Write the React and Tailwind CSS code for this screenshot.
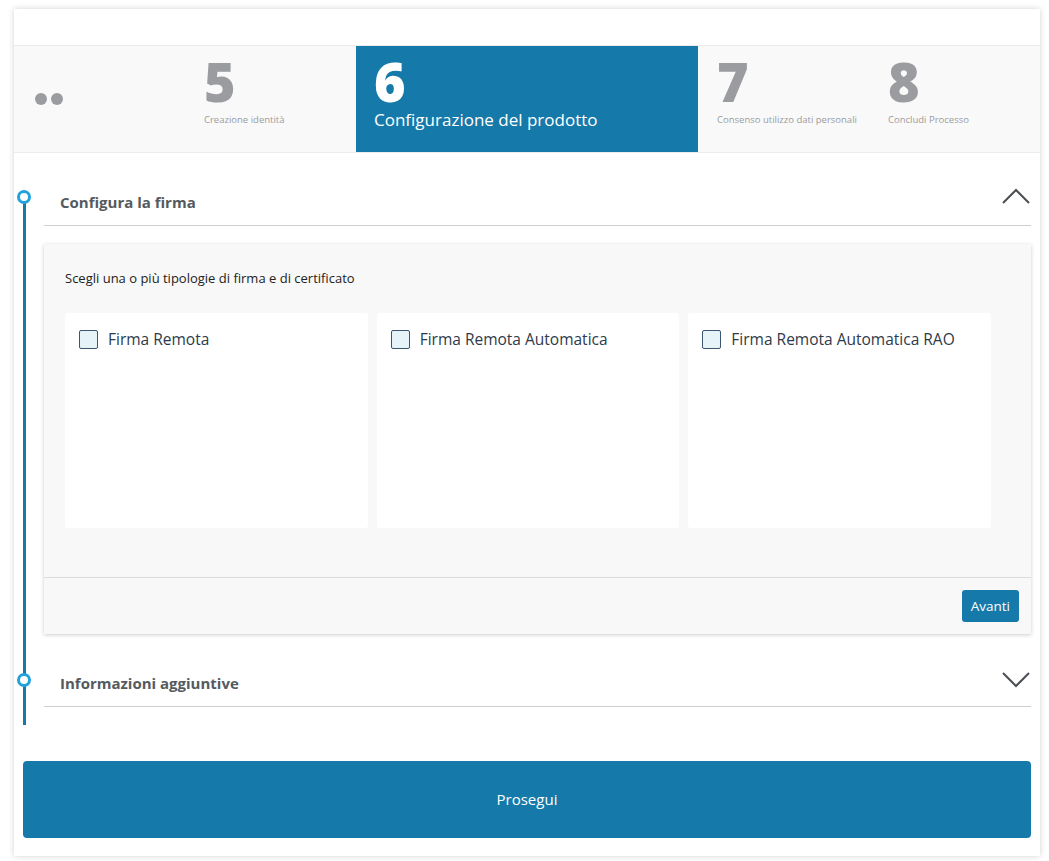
import React from "react";

const steps = [
  { n: "5", label: "Creazione identità" },
  { n: "6", label: "Configurazione del prodotto", active: true },
  { n: "7", label: "Consenso utilizzo dati personali" },
  { n: "8", label: "Concludi Processo" },
];

const options = ["Firma Remota", "Firma Remota Automatica", "Firma Remota Automatica RAO"];

const Chevron = ({ up }) => (
  <svg width="30" height="16" viewBox="0 0 30 16" fill="none" stroke="#4a4f55" strokeWidth="2">
    {up ? <path d="M2 15 L15 2 L28 15" /> : <path d="M2 1 L15 14 L28 1" />}
  </svg>
);

const Stepper = () => (
  <div className="grid grid-cols-6 h-[108px] bg-[#f9f9f9] border-y border-[#ececec]">
    <div className="flex items-center pl-[21px] gap-[4px]">
      <span className="w-[12px] h-[12px] rounded-full bg-[#9a9ca0]" />
      <span className="w-[12px] h-[12px] rounded-full bg-[#9a9ca0]" />
    </div>
    {steps.map((s) =>
      s.active ? (
        <div key={s.n} className="col-span-2 bg-[#1579aa] pl-[18px] pt-[13px] text-white">
          <div className="text-[54px] font-extrabold leading-[44px]">{s.n}</div>
          <div className="text-[17px] leading-[22px] mt-[6px]">{s.label}</div>
        </div>
      ) : (
        <div key={s.n} className="pl-[19px] pt-[13px] text-[#9a9ca0]">
          <div className="text-[54px] font-extrabold leading-[44px]">{s.n}</div>
          <div className="text-[9.5px] leading-[12px] mt-[11px]">{s.label}</div>
        </div>
      )
    )}
  </div>
);

const SectionHeader = ({ title, open }) => (
  <div className="flex items-center justify-between h-[52px] ml-[30px] border-b border-[#cfcfcf]">
    <span className="pl-[16px] pt-[6px] text-[15px] font-bold text-[#555a60]">{title}</span>
    <span className={open ? "pb-[8px]" : "pb-[2px]"}>
      <Chevron up={open} />
    </span>
  </div>
);

export default function App() {
  return (
    <div
      className="min-h-screen bg-white pt-[9px] px-[14px] pb-[5px]"
      style={{ fontFamily: '"Open Sans", "Noto Sans", sans-serif' }}
    >
      <div className="w-[1026px] bg-white shadow-[0_0_6px_rgba(0,0,0,0.18)] pt-[36px] pb-[18px]">
        <Stepper />

        <div className="relative mt-[21px] pr-[9px]">
          <span className="absolute left-[9px] top-[22px] bottom-[0px] w-[3px] bg-[#1579aa]" />
          <div className="relative">
            <span className="absolute left-[3px] top-[16px] w-[14px] h-[14px] rounded-full border-[3px] border-[#22a2dc] bg-white" />
            <SectionHeader title="Configura la firma" open />
          </div>

          <div className="ml-[30px] mt-[18px] bg-[#f8f8f8] shadow-[0_1px_4px_rgba(0,0,0,0.2)]">
            <div className="px-[21px] pt-[25px] pb-[49px]">
              <p className="text-[13px] text-[#222] leading-[18px]">
                Scegli una o più tipologie di firma e di certificato
              </p>
              <div className="grid grid-cols-3 gap-[9px] mt-[26px] w-[926px]">
                {options.map((o) => (
                  <div key={o} className="h-[215px] bg-white rounded-[3px] px-[14px] pt-[15px]">
                    <label className="flex items-center gap-[10px] text-[15.5px] text-[#2e3a4a]">
                      <span className="w-[19px] h-[19px] rounded-[2px] border border-[#3d5570] bg-[#e6f3f9]" />
                      {o}
                    </label>
                  </div>
                ))}
              </div>
            </div>
            <div className="flex justify-end border-t border-[#dcdcdc] px-[12px] pt-[12px] pb-[12px]">
              <button className="h-[32px] px-[9px] rounded-[3px] bg-[#1579aa] text-white text-[13.5px]">
                Avanti
              </button>
            </div>
          </div>

          <div className="relative mt-[21px] pb-[18px]">
            <span className="absolute left-[3px] top-[18px] w-[14px] h-[14px] rounded-full border-[3px] border-[#22a2dc] bg-white" />
            <SectionHeader title="Informazioni aggiuntive" />
          </div>
        </div>

        <div className="px-[9px] mt-[36px]">
          <button className="w-full h-[77px] rounded-[4px] bg-[#1579aa] text-white text-[15px]">
            Prosegui
          </button>
        </div>
      </div>
    </div>
  );
}
